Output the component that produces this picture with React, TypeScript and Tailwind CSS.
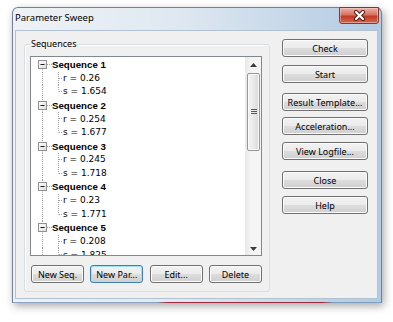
import React from "react";

const seqs = [
  { n: 1, r: "0.26", s: "1.654" },
  { n: 2, r: "0.254", s: "1.677" },
  { n: 3, r: "0.245", s: "1.718" },
  { n: 4, r: "0.23", s: "1.771" },
  { n: 5, r: "0.208", s: "1.825" },
];

function Btn({ label, focused, className }: { label: string; focused?: boolean; className?: string }) {
  return (
    <div
      className={`flex h-[18px] items-center justify-center rounded-[3px] border bg-[linear-gradient(#f2f2f2_0%,#ebebeb_50%,#dddddd_50%,#cfcfcf_100%)] text-[9px] leading-none text-black ${
        focused
          ? "border-[#3c7fb1] shadow-[inset_0_0_0_1px_#9ee3fb]"
          : "border-[#707070] shadow-[inset_0_0_0_1px_#fbfbfb]"
      } ${className ?? ""}`}
    >
      {label}
    </div>
  );
}

function SeqGuide({ first }: { first: boolean }) {
  return (
    <svg width="21" height="13.6" className="shrink-0">
      {!first && <line x1="11.5" y1="0" x2="11.5" y2="2.5" stroke="#a0a0a0" strokeDasharray="1 1" />}
      <line x1="11.5" y1="11.5" x2="11.5" y2="13.6" stroke="#a0a0a0" strokeDasharray="1 1" />
      <line x1="16" y1="6.5" x2="21" y2="6.5" stroke="#a0a0a0" strokeDasharray="1 1" />
      <defs>
        <linearGradient id="bx" x1="0" y1="0" x2="1" y2="1">
          <stop offset="0" stopColor="#ffffff" />
          <stop offset="1" stopColor="#dcdcdc" />
        </linearGradient>
      </defs>
      <rect x="7.5" y="2.5" width="8" height="8" fill="url(#bx)" stroke="#919191" />
      <line x1="9.5" y1="6.5" x2="13.5" y2="6.5" stroke="#1a1a1a" />
    </svg>
  );
}

function ChildGuide({ last }: { last: boolean }) {
  return (
    <svg width="32" height="13.6" className="shrink-0">
      <line x1="11.5" y1="0" x2="11.5" y2="13.6" stroke="#a0a0a0" strokeDasharray="1 1" />
      <line x1="27.5" y1="0" x2="27.5" y2={last ? 6.5 : 13.6} stroke="#a0a0a0" strokeDasharray="1 1" />
      <line x1="28" y1="6.5" x2="32" y2="6.5" stroke="#a0a0a0" strokeDasharray="1 1" />
    </svg>
  );
}

export default function App() {
  return (
    <div className="h-[322px] w-[393px] overflow-hidden bg-white pl-[12px] pt-[7px] font-['Noto_Sans',sans-serif]">
      <div className="flex h-[296px] w-[370px] flex-col rounded-t-[6px] border-x border-t border-[#6f8296] bg-[linear-gradient(to_right,#eef2f6,#dfe8f1_45%,#b2cae2)] shadow-[2px_3px_8px_rgba(0,0,0,0.35)]">
        {/* title bar */}
        <div className="flex h-[22px] shrink-0 items-start">
          <div className="pl-[2px] pt-[4px] text-[9.5px] leading-[12px] text-black">Parameter Sweep</div>
          <div className="flex-1" />
          <div className="mr-[2px] -mt-px flex h-[17px] w-[40px] items-center justify-center rounded-b-[3px] border border-[#7a3a36] bg-[linear-gradient(#eab1a5,#d8725f_45%,#c13a26_55%,#d3674f)] shadow-[inset_0_0_0_1px_rgba(255,210,200,0.5)]">
            <svg width="13" height="11" viewBox="0 0 13 11">
              <path d="M3 2 L10 9 M10 2 L3 9" stroke="#4a1a16" strokeWidth="4" strokeLinecap="round" />
              <path d="M3 2 L10 9 M10 2 L3 9" stroke="#ffffff" strokeWidth="2.2" strokeLinecap="round" />
            </svg>
          </div>
        </div>
        {/* client area */}
        <div className="ml-[2px] mr-[3px] flex h-[269px] border border-[#b3c2d1] bg-[#f0f0f0]">
          {/* groupbox */}
          <div className="ml-[8px] mt-[13px] flex h-[248px] w-[246px] flex-col rounded-[3px] border border-[#d5dfe5] px-[5px] pr-[7px] shadow-[inset_1px_1px_0_#ffffff]">
            <div className="-mt-[7px] ml-0 w-fit bg-[#f0f0f0] px-[1px] text-[9px] leading-[12px] text-black">Sequences</div>
            <div className="mt-[6px] flex h-[200px] w-[232px] border border-[#828790] bg-white">
              <div className="flex flex-1 flex-col overflow-hidden pt-[1px] font-['DejaVu_Sans',sans-serif] text-[9px] text-black">
                {seqs.map((q, i) => (
                  <React.Fragment key={q.n}>
                    <div className="flex h-[13.6px] shrink-0 items-center">
                      <SeqGuide first={i === 0} />
                      <span className="font-['Liberation_Sans',sans-serif] text-[9.7px] font-bold leading-none">Sequence {q.n}</span>
                    </div>
                    <div className="flex h-[13.6px] shrink-0 items-center">
                      <ChildGuide last={false} />
                      <span className="leading-none">r = {q.r}</span>
                    </div>
                    <div className="flex h-[13.6px] shrink-0 items-center">
                      <ChildGuide last={true} />
                      <span className="leading-none">s = {q.s}</span>
                    </div>
                  </React.Fragment>
                ))}
              </div>
              {/* scrollbar */}
              <div className="flex w-[16px] shrink-0 flex-col border-l border-[#ebebeb] bg-[linear-gradient(to_right,#e9e9e9,#f5f5f5_35%,#f5f5f5)]">
                <div className="flex h-[16px] items-center justify-center">
                  <svg width="7" height="4" viewBox="0 0 7 4">
                    <path d="M0 4 L3.5 0 L7 4Z" fill="#3c3c3c" />
                  </svg>
                </div>
                <div className="mx-[1px] flex h-[78px] items-center justify-center rounded-[2px] border border-[#979797] bg-[linear-gradient(to_right,#f4f4f4,#e9e9e9_50%,#d8d8d8)] shadow-[inset_0_0_0_1px_#fafafa]">
                  <svg width="6" height="6" viewBox="0 0 6 6">
                    <path d="M0 0.5 H6 M0 2.5 H6 M0 4.5 H6" stroke="#5a5a5a" />
                  </svg>
                </div>
                <div className="flex-1" />
                <div className="flex h-[12px] items-start justify-center pt-[4px]">
                  <svg width="7" height="4" viewBox="0 0 7 4">
                    <path d="M0 0 L3.5 4 L7 0Z" fill="#3c3c3c" />
                  </svg>
                </div>
              </div>
            </div>
            <div className="mt-[9px] flex w-[232px] justify-between pl-[1px]">
              <Btn label="New Seq." className="w-[53px]" />
              <Btn label="New Par..." focused className="w-[53px]" />
              <Btn label="Edit..." className="w-[53px]" />
              <Btn label="Delete" className="w-[53px]" />
            </div>
          </div>
          {/* right buttons */}
          <div className="ml-[12px] flex w-[86px] flex-col pt-[8px]">
            <Btn label="Check" />
            <Btn label="Start" className="mt-[8px]" />
            <Btn label="Result Template..." className="mt-[10px]" />
            <Btn label="Acceleration..." className="mt-[6px]" />
            <Btn label="View Logfile..." className="mt-[7px]" />
            <Btn label="Close" className="mt-[11px]" />
            <Btn label="Help" className="mt-[7px]" />
          </div>
        </div>
        <div className="h-[3px] shrink-0" />
        <div className="h-px shrink-0 bg-[linear-gradient(to_right,#8aa6c2_0%,#8aa6c2_39%,#a3283a_42%,#a3283a_84%,#7d9fc2_87%,#7d9fc2_100%)]" />
      </div>
    </div>
  );
}
